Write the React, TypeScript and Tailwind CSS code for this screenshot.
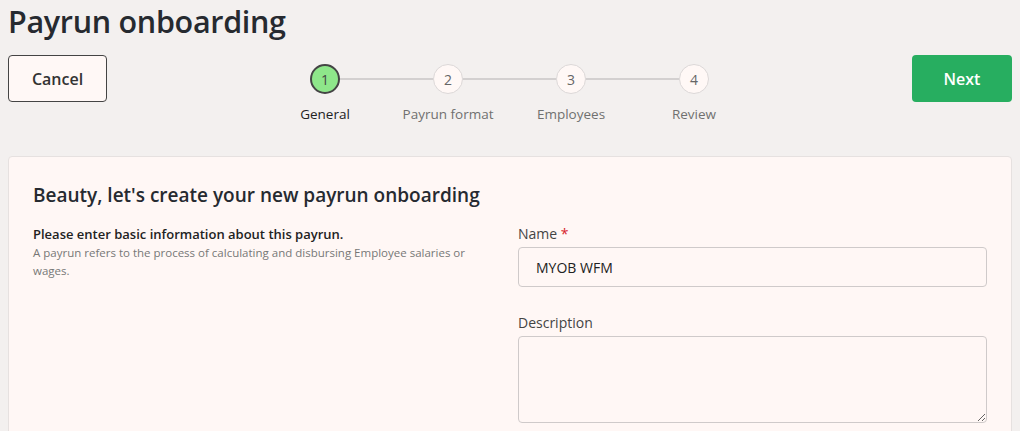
const steps = ["General", "Payrun format", "Employees", "Review"];

const Stepper = () => {
  return (
    <div className="w-[492px] pt-[9px]">
      <div className="flex items-center px-[46.5px]">
        {steps.map((s, i) => (
          <div key={s} className="flex items-center">
            {i > 0 && <div className="h-[2px] w-[93px] bg-[#d3d0d0]" />}
            <div
              className={
                i === 0
                  ? "flex h-[30px] w-[30px] items-center justify-center rounded-full border-2 border-[#444] bg-[#8ee68a] text-[14px] text-[#444]"
                  : "flex h-[30px] w-[30px] items-center justify-center rounded-full border border-[#dcd8d8] bg-[#fff8f6] text-[14px] text-[#666]"
              }
            >
              {i + 1}
            </div>
          </div>
        ))}
      </div>
      <div className="mt-[10px] grid grid-cols-4 text-center text-[13.5px] leading-[20px]">
        {steps.map((s, i) => (
          <span key={s} className={i === 0 ? "text-[#222]" : "text-[#707070]"}>
            {s}
          </span>
        ))}
      </div>
    </div>
  );
};

const App = () => {
  return (
    <div
      className="min-h-[431px] bg-[#f3f0ef] px-2 text-[#252a31]"
      style={{ fontFamily: '"Open Sans", "Noto Sans", sans-serif' }}
    >
      <h1 className="text-[30.5px] font-semibold leading-[42px] tracking-[-0.3px] text-[#262a30]">
        Payrun onboarding
      </h1>

      <div className="mt-[13px] flex items-start justify-between">
        <button className="h-[47px] w-[99px] rounded-[4px] border border-[#444] bg-[#fff8f6] text-[16px] font-semibold text-[#333]">
          Cancel
        </button>
        <Stepper />
        <button className="h-[47px] w-[100px] rounded-[4px] bg-[#27ae60] text-[16px] font-semibold text-white">
          Next
        </button>
      </div>

      <div className="mt-[32px] rounded-[4px] border border-[#e6e1e0] bg-[#fff7f5] px-6 pt-6 pb-6">
        <h2 className="text-[19px] font-semibold leading-[28px] text-[#262a30]">
          Beauty, let's create your new payrun onboarding
        </h2>
        <div className="mt-[15px] grid grid-cols-2 gap-4">
          <div>
            <p className="text-[13px] font-semibold leading-[20px] text-[#222]">
              Please enter basic information about this payrun.
            </p>
            <p className="text-[11.5px] leading-[18px] text-[#777] pr-4">
              A payrun refers to the process of calculating and disbursing Employee salaries or
              wages.
            </p>
          </div>
          <div>
            <label className="block text-[14px] leading-[20px] text-[#444]">
              Name <span className="text-[#d6232b]">*</span>
            </label>
            <input
              defaultValue="MYOB WFM"
              className="mt-[3px] block h-10 w-full rounded-[4px] border border-[#cfcaca] bg-[#fff7f5] px-[17px] text-[14px] text-[#222] outline-none"
              style={{ fontFamily: '"Open Sans", "Noto Sans", sans-serif' }}
            />
            <label className="mt-[26px] block text-[14px] leading-[20px] text-[#444]">
              Description
            </label>
            <textarea
              className="mt-[3px] block h-[87px] w-full rounded-[4px] border border-[#cfcaca] bg-[#fff7f5] px-[17px] text-[14px] outline-none"
            />
          </div>
        </div>
      </div>
    </div>
  );
};

export default App;
